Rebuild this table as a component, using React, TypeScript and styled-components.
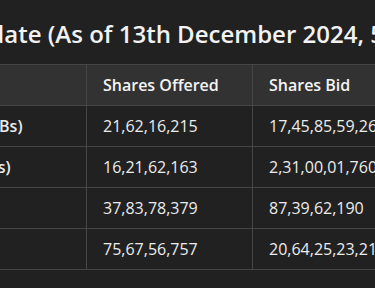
import styled, { createGlobalStyle } from "styled-components";

// The page is scrolled sideways: the start of the title and the first column sit off to the left.
const SHIFT = 274;

const GlobalStyle = createGlobalStyle`
  html, body {
    margin: 0;
    padding: 0;
    background: #212121;
  }
`;

const Page = styled.div`
  width: 375px;
  height: 288px;
  overflow: hidden;
  background: #212121;
  color: #ececec;
  font-family: "Open Sans", "Noto Sans", sans-serif;
`;

const Content = styled.div`
  margin-left: -${SHIFT}px;
  padding-top: 18px;
  width: 1100px;
`;

const Title = styled.h3`
  margin: 0 0 14px;
  font-size: 24px;
  font-weight: 600;
  line-height: 32px;
  color: #f2f2f2;
  white-space: nowrap;
`;

const Table = styled.table`
  border-collapse: collapse;
  table-layout: fixed;
  width: ${SHIFT + 86 + 166 + 170 + 220}px;
  font-size: 16px;
  line-height: 24px;
`;

const Col = styled.col<{ $w: number }>`
  width: ${(p) => p.$w}px;
`;

const HeadCell = styled.th`
  background: #323232;
  border: 1px solid #464646;
  padding: 8px 16px;
  text-align: left;
  font-weight: 600;
  color: #f4f4f4;
  white-space: nowrap;
  overflow: hidden;
`;

const Cell = styled.td<{ $bold?: boolean }>`
  border: 1px solid #464646;
  padding: 8px 16px;
  font-weight: ${(p) => (p.$bold ? 600 : 400)};
  letter-spacing: ${(p) => (p.$bold ? "0.08px" : "normal")};
  color: #ececec;
  white-space: nowrap;
  overflow: hidden;
`;

type Row = {
  category: string;
  bold: boolean;
  offered: string;
  bid: string;
  times: string;
};

const rows: Row[] = [
  {
    category: "Qualified Institutional Buyers (QIBs)",
    bold: true,
    offered: "21,62,16,215",
    bid: "17,45,85,59,265",
    times: "80.70",
  },
  {
    category: "Non–Institutional Investors (bNIIs)",
    bold: true,
    offered: "16,21,62,163",
    bid: "2,31,00,01,760",
    times: "142.41",
  },
  {
    category: "Retail Investors",
    bold: false,
    offered: "37,83,78,379",
    bid: "87,39,62,190",
    times: "2.31",
  },
  {
    category: "Total",
    bold: false,
    offered: "75,67,56,757",
    bid: "20,64,25,23,215",
    times: "27.28",
  },
];

export default function App() {
  return (
    <>
      <GlobalStyle />
      <Page>
        <Content>
          <Title>Subscription Status Update (As of 13th December 2024, 5:00 PM)</Title>
          <Table>
            <colgroup>
              <Col $w={SHIFT + 86} />
              <Col $w={166} />
              <Col $w={170} />
              <Col $w={220} />
            </colgroup>
            <thead>
              <tr>
                <HeadCell>Category</HeadCell>
                <HeadCell>Shares Offered</HeadCell>
                <HeadCell>Shares Bid</HeadCell>
                <HeadCell>Subscription (Times)</HeadCell>
              </tr>
            </thead>
            <tbody>
              {rows.map((row) => (
                <tr key={row.category}>
                  <Cell $bold={row.bold}>{row.category}</Cell>
                  <Cell>{row.offered}</Cell>
                  <Cell>{row.bid}</Cell>
                  <Cell>{row.times}</Cell>
                </tr>
              ))}
            </tbody>
          </Table>
        </Content>
      </Page>
    </>
  );
}
